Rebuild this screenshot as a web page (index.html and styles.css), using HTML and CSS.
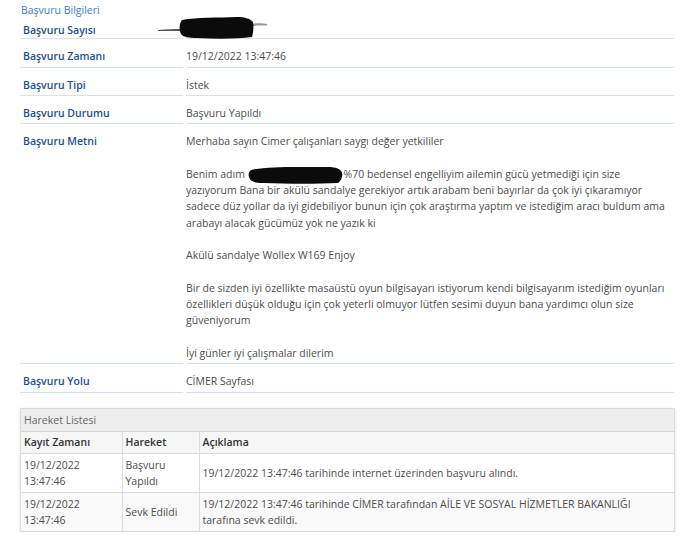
FILE: index.html
```html
<!DOCTYPE html>
<html lang="tr">
<head>
  <meta charset="UTF-8" />
  <meta name="viewport" content="width=device-width, initial-scale=1.0" />
  <title>Başvuru Bilgileri</title>
  <link rel="stylesheet" href="styles.css">
</head>
<body>
  <div class="page">
    <div class="title">Başvuru Bilgileri</div>

    <div class="info">
      <svg class="redact-num" width="112" height="24" viewBox="0 0 112 24">
        <path d="M1 14 C10 13 18 13 26 13 L26 15 C18 15 10 15 1 15 Z" fill="#555"/>
        <path d="M94 8 C100 7 106 7 110 8 L110 9.5 C104 9.5 99 9.5 94 10 Z" fill="#999"/>
        <path d="M25 4 C40 1 60 2 80 1 C88 1 94 3 96 6 C97 12 96 18 95 21 C80 23 60 23 40 22 C32 22 26 21 24 18 C22 14 22 8 25 4 Z" fill="#0b0b0b"/>
      </svg>

      <div class="row first">
        <div class="label">Başvuru Sayısı</div>
        <div class="value">&nbsp;</div>
      </div>
      <div class="row">
        <div class="label">Başvuru Zamanı</div>
        <div class="value">19/12/2022 13:47:46</div>
      </div>
      <div class="row">
        <div class="label">Başvuru Tipi</div>
        <div class="value">İstek</div>
      </div>
      <div class="row">
        <div class="label">Başvuru Durumu</div>
        <div class="value">Başvuru Yapıldı</div>
      </div>
      <div class="row">
        <div class="label">Başvuru Metni</div>
        <div class="value">
          <p>Merhaba sayın Cimer çalışanları saygı değer yetkililer</p>
          <p>Benim adım <span class="redact-name"><svg width="96" height="20" viewBox="0 0 96 20"><path d="M3 5 C20 1 50 2 80 2 C88 2 93 4 94 8 C95 12 93 16 90 18 C70 19 40 19 15 18 C6 18 2 16 1 12 C0 9 1 7 3 5 Z" fill="#0b0b0b"/></svg></span>%70 bedensel engelliyim ailemin gücü yetmediği için size<br>
          yazıyorum Bana bir akülü sandalye gerekiyor artık arabam beni bayırlar da çok iyi çıkaramıyor<br>
          sadece düz yollar da iyi gidebiliyor bunun için çok araştırma yaptım ve istediğim aracı buldum ama<br>
          arabayı alacak gücümüz yok ne yazık ki</p>
          <p>Akülü sandalye Wollex W169 Enjoy</p>
          <p>Bir de sizden iyi özellikte masaüstü oyun bilgisayarı istiyorum kendi bilgisayarım istediğim oyunları<br>
          özellikleri düşük olduğu için çok yeterli olmuyor lütfen sesimi duyun bana yardımcı olun size<br>
          güveniyorum</p>
          <p>İyi günler iyi çalışmalar dilerim</p>
        </div>
      </div>
      <div class="row">
        <div class="label">Başvuru Yolu</div>
        <div class="value">CİMER Sayfası</div>
      </div>
    </div>

    <div class="panel">
      <div class="panel-heading">Hareket Listesi</div>
      <table class="moves">
        <colgroup>
          <col class="c-time">
          <col class="c-act">
          <col>
        </colgroup>
        <thead>
          <tr>
            <th>Kayıt Zamanı</th>
            <th>Hareket</th>
            <th>Açıklama</th>
          </tr>
        </thead>
        <tbody>
          <tr>
            <td>19/12/2022<br>13:47:46</td>
            <td>Başvuru<br>Yapıldı</td>
            <td>19/12/2022 13:47:46 tarihinde internet üzerinden başvuru alındı.</td>
          </tr>
          <tr class="alt">
            <td>19/12/2022<br>13:47:46</td>
            <td>Sevk Edildi</td>
            <td>19/12/2022 13:47:46 tarihinde CİMER tarafından AİLE VE SOSYAL HİZMETLER BAKANLIĞI<br>tarafına sevk edildi.</td>
          </tr>
        </tbody>
      </table>
    </div>
  </div>
</body>
</html>
```

FILE: styles.css
```css
body {
  margin: 0;
  background: #fff;
  font-family: 'Open Sans', 'Noto Sans', sans-serif;
  font-size: 10.5px;
  color: #4d4d4d;
}
.page {
  width: 654px;
  padding-left: 20px;
}
.title {
  color: #3f7dbd;
  line-height: 16px;
  padding: 2px 0 0 1px;
}
.info {
  position: relative;
}
.redact-num {
  position: absolute;
  left: 137px;
  top: -2px;
}
.row {
  display: grid;
  grid-template-columns: 163px 1fr;
  column-gap: 3px;
  line-height: 16.3px;
}
.label,
.value {
  padding: 9px 0 2px;
  border-bottom: 1px solid #d5e1ec;
}
.row.first .label,
.row.first .value {
  padding-top: 4px;
  padding-bottom: 0;
}
.label {
  padding-left: 3px;
  color: #1f4f8d;
  font-weight: 600;
}
.value p {
  margin: 0 0 16.3px;
}
.value p:last-child {
  margin-bottom: 0;
}
.redact-name {
  display: inline-block;
  width: 96px;
  height: 16px;
  position: relative;
  vertical-align: top;
}
.redact-name svg {
  position: absolute;
  left: 0;
  top: -1px;
}
.panel {
  margin-top: 15px;
  width: 653px;
  border: 1px solid #dcdcdc;
  box-shadow: 0 1px 3px rgba(0,0,0,0.12);
}
.panel-heading {
  background: #eeeeee;
  color: #666;
  padding: 3px 3px 3px;
  line-height: 16px;
  border-bottom: 1px solid #d6d6d6;
}
.moves {
  width: 100%;
  border-collapse: collapse;
  line-height: 16px;
}
.c-time {
  width: 101px;
}
.c-act {
  width: 77px;
}
.moves th {
  background: #f6f6f6;
  color: #333;
  font-weight: 600;
  text-align: left;
  padding: 2px 3px 3px;
  border-right: 1px solid #dcdcdc;
  border-bottom: 1px solid #dcdcdc;
}
.moves td {
  padding: 3px 3px 3px;
  border-right: 1px solid #dcdcdc;
  border-bottom: 1px solid #dcdcdc;
  vertical-align: middle;
  color: #4d4d4d;
}
.moves th:last-child,
.moves td:last-child {
  border-right: none;
}
.moves tr:last-child td {
  border-bottom: none;
}
.moves tr.alt td {
  background: #f9f9f9;
}
```
